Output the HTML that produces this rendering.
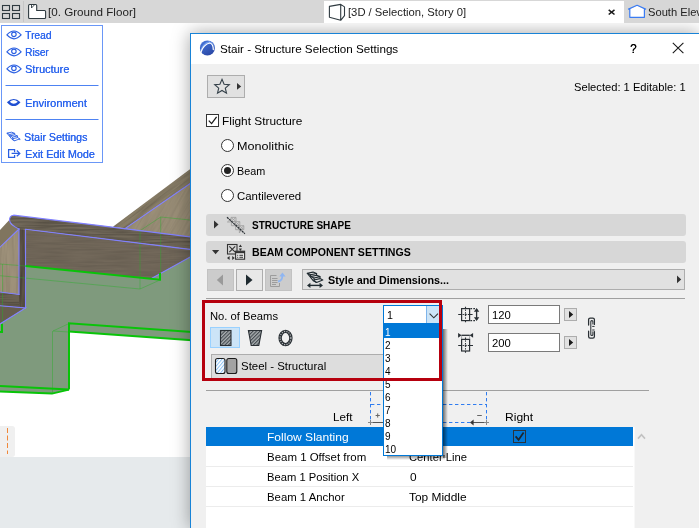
<!DOCTYPE html>
<html>
<head>
<meta charset="utf-8">
<style>
html,body{margin:0;padding:0;}
body{width:699px;height:528px;overflow:hidden;position:relative;background:#fff;font-family:"Liberation Sans",sans-serif;font-size:12px;color:#000;}
.abs{position:absolute;}
.t{position:absolute;white-space:pre;line-height:14px;font-size:11.5px;color:#000;transform-origin:0 0;}
svg{position:absolute;overflow:visible;}
#tabbar{left:0;top:0;width:699px;height:23px;background:#d7d7d7;}
#acttab{left:324px;top:1px;width:300px;height:23px;background:#fff;}
#panel{left:1px;top:25px;width:102px;height:138px;border:1px solid #6a97f7;background:#fff;box-sizing:border-box;}
#dlg{left:190px;top:10px;width:509px;height:495px;background:#f0f0f0;border-left:1px solid #1883d7;border-top:1px solid #1883d7;box-sizing:border-box;box-shadow:0 0 17px rgba(0,0,0,0.36);}
#title{left:191px;top:34px;width:508px;height:30px;background:#fff;}
.sec{left:206px;width:480px;height:22px;background:#d7d7d7;border-radius:3px;}
.btn{background:#e1e1e1;border:1px solid #adadad;box-sizing:border-box;}
.btnd{background:#cccccc;border:1px solid #bfbfbf;box-sizing:border-box;}
.inp{background:#fff;border:1px solid #7a7a7a;box-sizing:border-box;}
.rad{width:13px;height:13px;border:1px solid #333;border-radius:50%;background:#fff;box-sizing:border-box;left:221px;}
.li{position:absolute;left:385px;font-size:11.5px;line-height:13px;color:#000;transform-origin:0 0;transform:scaleX(0.87);}
</style>
</head>
<body>
<!-- ================= tab bar ================= -->
<div id="tabbar" class="abs"></div>
<div id="acttab" class="abs"></div>
<svg style="left:0;top:0;" width="699" height="24" viewBox="0 0 699 24">
  <g fill="none" stroke="#2f3a40" stroke-width="1.1">
    <rect x="2.5" y="5.5" width="7" height="5"/><rect x="12.5" y="5.5" width="7" height="5"/>
    <rect x="2.5" y="13.5" width="7" height="5"/><rect x="12.5" y="13.5" width="7" height="5"/>
  </g>
  <rect x="23" y="1" width="1" height="21" fill="#c6c6c6"/>
  <path d="M28.6 5.5 Q28.6 4.5 29.6 4.5 H35.7 Q36.7 4.5 36.7 5.5 V10.5 H44.6 Q45.6 10.5 45.6 11.5 V17.5 Q45.6 18.5 44.6 18.5 H29.6 Q28.6 18.5 28.6 17.5 Z" fill="#fff" stroke="#2f3a40" stroke-width="1.1"/>
  <path d="M31.5 4.8 V8 L34.5 4.8" fill="none" stroke="#2f3a40" stroke-width="0.9"/>
  <!-- 3D box icon -->
  <path d="M329.4 6.4 L340.7 4.4 V20.3 L329.4 17.2 Z M340.7 4.4 L344.5 6.9 V15.7 L340.7 20.3" fill="none" stroke="#2f3a40" stroke-width="1.1" stroke-linejoin="round"/>
  <!-- close x -->
  <path d="M608.7 9.9 L614.5 14.5 M614.5 9.9 L608.7 14.5" stroke="#1a1a1a" stroke-width="1.55" fill="none"/>
  <!-- house -->
  <path d="M629.8 9 L637.1 5.6 L644.4 9 V17.3 H629.8 Z" fill="#fff" stroke="none"/><path d="M628.5 9.1 L637.1 5.3 L645.6 9.1 M629.8 8.8 V17.3 H644.4 V8.8" fill="none" stroke="#3a7bf2" stroke-width="1.2" stroke-linejoin="round" stroke-linecap="round"/>
</svg>
<div class="t" style="left:47.90px;top:5.00px;transform:scaleX(1.0122);color:#222;">[0. Ground Floor]</div>
<div class="t" style="left:347.90px;top:5.00px;transform:scaleX(0.9775);color:#222;">[3D / Selection, Story 0]</div>
<div class="t" style="left:647.80px;top:5.00px;transform:scaleX(0.9700);color:#222;">South Elevation</div>

<!-- ================= 3D scene ================= -->
<svg id="scene" style="left:0;top:0;" width="192" height="528" viewBox="0 0 192 528">
  <defs>
    <filter id="grain" x="0" y="0" width="100%" height="100%">
      <feTurbulence type="fractalNoise" baseFrequency="0.03 0.55" numOctaves="2" seed="3" result="n"/>
      <feColorMatrix in="n" type="matrix" values="0 0 0 0 0  0 0 0 0 0  0 0 0 0 0  0.9 0 0 0 -0.28" result="a"/>
      <feComposite in="a" in2="SourceGraphic" operator="in"/>
    </filter>
    <filter id="grainv" x="0" y="0" width="100%" height="100%">
      <feTurbulence type="fractalNoise" baseFrequency="0.5 0.03" numOctaves="2" seed="5" result="n"/>
      <feColorMatrix in="n" type="matrix" values="0 0 0 0 0  0 0 0 0 0  0 0 0 0 0  0.9 0 0 0 -0.3" result="a"/>
      <feComposite in="a" in2="SourceGraphic" operator="in"/>
    </filter>
    <linearGradient id="gA" x1="0" y1="0" x2="0.4" y2="1">
      <stop offset="0" stop-color="#6f6656"/><stop offset="0.45" stop-color="#8d826b"/><stop offset="1" stop-color="#857a64"/>
    </linearGradient>
  </defs>
  <!-- upper right diagonal wood -->
  <polygon points="112.9,226.7 192,167.8 192,182.2 125,228.6" fill="url(#gA)"/>
  <polygon points="125,228.6 192,182.2 192,237.2" fill="#9a8e77"/>
  <!-- left pieces -->
  <polygon points="0,230 9.5,219.8 11,224.5 19,229 0,247.2" fill="#80755f"/>
  <polygon points="0,247.2 19,229 19,294.5 0,292" fill="#9e917a"/>
  <polygon points="19,229 25.5,229.3 25.5,308 19,307.5" fill="#5c5346"/>
  <polygon points="0,292 19,294.5 19,307.5 0,305.7" fill="#6a6152"/>
  <polygon points="0,305.7 25.5,308 0,324" fill="#675d4e"/>
  <!-- current tread: top/nose band -->
  <path id="nose" d="M13.5,215.2 L100,225.6 L192,237.1 L192,249.6 L26,229.3 L19,229 Q10,225 9.5,220.3 Q9.6,215.4 13.5,215.2 Z" fill="#72695a"/>
  <!-- underside -->
  <polygon points="25.5,229.3 192,249.6 192,256 151,278.7 25.5,266" fill="#72685a"/>
  <!-- grain overlays -->
  <g filter="url(#grain)" opacity="0.55">
    <path d="M13.5,215.2 L192,237.1 L192,249.6 L26,229.3 L19,229 Q10,225 9.5,220.3 Q9.6,215.4 13.5,215.2 Z" fill="#000"/>
    <polygon points="0,292 19,294.5 19,307.5 0,305.7" fill="#000"/>
  </g>
  <clipPath id="clipA"><polygon points="112.9,226.7 192,167.8 192,182.2 125,228.6"/></clipPath>
  <clipPath id="clipB"><polygon points="125,228.6 192,182.2 192,237.2"/></clipPath>
  <g clip-path="url(#clipA)" opacity="0.4"><g transform="rotate(-36.7 150 200)"><rect x="60" y="150" width="200" height="110" fill="#000" filter="url(#grain)"/></g></g>
  <g clip-path="url(#clipB)" opacity="0.16"><g transform="rotate(-60 150 200)"><rect x="60" y="120" width="200" height="170" fill="#000" filter="url(#grain)"/></g></g>
  <g filter="url(#grain)" opacity="0.2">
    <polygon points="25.5,229.3 192,249.6 192,256 151,278.7 25.5,266" fill="#000"/>
  </g>
  <g filter="url(#grainv)" opacity="0.5">
    <polygon points="19,229 25.5,229.3 25.5,308 19,307.5" fill="#000"/>
  </g>
  <g filter="url(#grainv)" opacity="0.18">
    <polygon points="0,247.2 19,229 19,294.5 0,292" fill="#000"/>
  </g>
  <!-- green region -->
  <polygon points="25.5,266 151,278.7 192,256 192,340.2 69,331.4 69,389.6 52,393.6 0,391.4 0,324 25.5,308" fill="#7f9a7d"/>
  <!-- thin green lines -->
  <g fill="none" stroke="#27b027" stroke-width="1" opacity="0.42">
    <path d="M0,264 L25.5,266 M2.5,264 V324 M0,275.7 L140,289 L160,280 M140,230.7 V289 M160.7,217 V273 M160.7,217 L192,220.2 M160.7,217 L140,230.7 M53,331 L68,324 M52.5,331 V393 M53,331 L69,332"/>
  </g>
  <!-- blue lines -->
  <g fill="none" stroke="#8080ff" stroke-width="1.15" stroke-linecap="round">
    <path d="M192,237.1 L100,225.6 L13.5,215.2 Q9.6,215.4 9.5,220.3 Q10,225 19,229"/>
    <path d="M25.5,229.3 L192,249.6"/>
    <path d="M19,229 V294.5 M25.5,229.3 V308"/>
    <path d="M0,247.2 L19,229"/>
    <path d="M0,292 L19,294.5"/>
    <path d="M0,305.7 L25.5,308 L0,324"/>
    <path d="M125,228.6 L192,182.2"/>
    <path d="M151,278.7 L192,256"/>
  </g>
  <!-- bright green lines -->
  <g fill="none" stroke="#08c408" stroke-width="2" stroke-linejoin="miter">
    <path d="M25.5,266 L160,279.7 V272.9"/>
    <path d="M69,389.6 V323.3 L192,332"/>
    <path d="M69,331.4 L192,340.2"/>
    <path d="M0,386 L69,389.6"/>
    <path d="M0,391.4 L52,393.6 L69,389.6"/>
    <path d="M2,324 V332 H0"/>
  </g>
  <!-- bottom-left bar and small box -->
  <rect x="0" y="457" width="192" height="71" fill="#e6eaec"/>
  <path d="M0,426 H12 Q15,426 15,429 V454 Q15,457 12,457 H0 Z" fill="#f0f0f0"/>
  <path d="M7.5,428 V454" stroke="#f0883a" stroke-width="1" stroke-dasharray="5,2.5" fill="none"/>
</svg>

<!-- ================= left panel ================= -->
<div id="panel" class="abs"></div>
<svg style="left:0;top:0;" width="110" height="170" viewBox="0 0 110 170">
  <g fill="none" stroke="#2a5fe2" stroke-width="1.15">
    <!-- eyes -->
    <g><path d="M6.9,34.9 Q14,27 21.1,34.9 Q14,42.7 6.9,34.9 Z"/><circle cx="13.9" cy="34.3" r="2.25"/></g>
    <g transform="translate(0,17)"><path d="M6.9,34.9 Q14,27 21.1,34.9 Q14,42.7 6.9,34.9 Z"/><circle cx="13.9" cy="34.3" r="2.25"/></g>
    <g transform="translate(0,34)"><path d="M6.9,34.9 Q14,27 21.1,34.9 Q14,42.7 6.9,34.9 Z"/><circle cx="13.9" cy="34.3" r="2.25"/></g>
  </g>
  <!-- environment -->
  <path fill-rule="evenodd" fill="#1f4fd2" d="M6.9,102.2 Q13.8,95.6 20.5,102.2 Q13.8,110 6.9,102.2 Z M9.7,101.7 Q13.8,98.4 17.8,101.7 Q13.8,105.8 9.7,101.7 Z"/>
  <!-- stair settings icon -->
  <g fill="none" stroke="#2a5fe2" stroke-width="1.1" stroke-linejoin="round" transform="translate(6.9,132.2) scale(0.83) translate(-307.2,-272.1)">
    <path d="M307.2,273.2 L313,272.1 L316.6,273.5 L310.6,274.8 Z"/>
    <path d="M310.6,274.8 V276.6 L316.6,275.3 V273.5 M316.6,275.3 L320,276.6 L314,278 L310.6,276.6"/>
    <path d="M314,278 V280 L320,278.6 V276.6 M320,278.6 L322.8,280.1 L316.6,282.4 L313.4,280.6"/>
    <path d="M307.2,273.2 L313.4,280.8 L316.6,282.4 M322.8,280.1 V281.6"/>
  </g>
  <!-- exit icon -->
  <g fill="none" stroke="#2a5fe2" stroke-width="1.25">
    <path d="M14.6,152.2 V149.6 H8.6 V157.4 H14.6 V155"/>
    <path d="M11.6,153.4 H19.4 M16.8,150.5 L19.8,153.4 L16.8,156.3"/>
  </g>
  <rect x="5.5" y="85" width="93" height="1" fill="#4d82f2"/>
  <rect x="5.5" y="119" width="93" height="1" fill="#4d82f2"/>
</svg>
<div class="t" style="left:25.40px;top:28.00px;transform:scaleX(0.8911);color:#2d66ee;text-shadow:0.35px 0 0 currentColor;">Tread</div>
<div class="t" style="left:25.40px;top:45.00px;transform:scaleX(0.8829);color:#2d66ee;text-shadow:0.35px 0 0 currentColor;">Riser</div>
<div class="t" style="left:25.40px;top:62.00px;transform:scaleX(0.9470);color:#2d66ee;text-shadow:0.35px 0 0 currentColor;">Structure</div>
<div class="t" style="left:25.40px;top:96.00px;transform:scaleX(0.9557);color:#2d66ee;text-shadow:0.35px 0 0 currentColor;">Environment</div>
<div class="t" style="left:24.40px;top:130.00px;transform:scaleX(0.9239);color:#2d66ee;text-shadow:0.35px 0 0 currentColor;">Stair Settings</div>
<div class="t" style="left:25.40px;top:147.00px;transform:scaleX(0.9413);color:#2d66ee;text-shadow:0.35px 0 0 currentColor;">Exit Edit Mode</div>

<!--DIALOG_START-->
<!-- ================= dialog ================= -->
<div class="abs" style="left:0;top:23px;width:699px;height:505px;overflow:hidden;"><div id="dlg" class="abs"></div></div>
<div id="title" class="abs"></div>
<div class="abs sec" style="top:214px;"></div>
<div class="abs sec" style="top:241px;"></div>
<svg style="left:0;top:0;" width="699" height="528" viewBox="0 0 699 528">
  <defs>
    <linearGradient id="acg" x1="0" y1="0" x2="0.6" y2="1"><stop offset="0" stop-color="#4a7ade"/><stop offset="1" stop-color="#2b4aa8"/></linearGradient>
    <pattern id="hatch" width="2.5" height="2.5" patternUnits="userSpaceOnUse" patternTransform="rotate(-45)"><rect width="2.5" height="2.5" fill="#a9aeb1"/><rect width="2.5" height="1.15" fill="#454c51"/></pattern>
    <pattern id="hatchb" width="2.6" height="2.6" patternUnits="userSpaceOnUse" patternTransform="rotate(-50)"><rect width="2.6" height="2.6" fill="#fff"/><rect width="2.6" height="1" fill="#8cc3f5"/></pattern>
  </defs>
  <!-- title icon -->
  <circle cx="207.4" cy="47.9" r="7.5" fill="url(#acg)"/>
  <path d="M200.3,50.5 Q202.5,42.5 209.5,41 Q214.5,43 214.8,49 Q213.5,43.6 209.6,43 Q203.6,44.6 200.9,52.2 Z" fill="#6b97ea"/><path d="M200.9,52.2 Q203.6,44.6 209.6,43 Q213.2,43.6 213.3,49.6" fill="none" stroke="#fff" stroke-width="1.25" stroke-linecap="round"/>
  <!-- close X -->
  <path d="M672.8,42.8 L683.4,53.2 M683.4,42.8 L672.8,53.2" stroke="#1a1a1a" stroke-width="1.1" fill="none"/>
  <!-- star button -->
  <rect x="207.5" y="75.5" width="37" height="22" fill="#e1e1e1" stroke="#adadad"/>
  <path d="M222.0,79.3 L224.1,84.2 L229.3,84.6 L225.3,88.1 L226.5,93.2 L222.0,90.5 L217.5,93.2 L218.7,88.1 L214.7,84.6 L219.9,84.2 Z" fill="none" stroke="#333f48" stroke-width="1.1" stroke-linejoin="miter"/>
  <path d="M237,83 L241.2,86.4 L237,89.8 Z" fill="#333"/>
  <!-- checkbox -->
  <rect x="206.5" y="114.5" width="12" height="12" fill="#fff" stroke="#333"/>
  <path d="M208.8,120.6 L211.6,123.6 L216.6,116.8" fill="none" stroke="#1a1a1a" stroke-width="1.3"/>
  <!-- section arrows -->
  <path d="M214,220.5 L218.5,224.5 L214,228.5 Z" fill="#333"/>
  <path d="M212,250 H219.2 L215.6,254.2 Z" fill="#333"/>
  <!-- section icon 1 -->
  <g fill="none" stroke="#a3a3a3" stroke-width="0.9">
    <path d="M231,217.4 h5 v4.2 h-5 Z M231,217.4 l5,4.2 M236,217.4 l-5,4.2"/>
    <path d="M231.4,221.6 h4 v4.1 h-4 Z M235.4,221.6 h4.4 v4.1 h-4.4 Z M235.4,221.6 l4.4,4.1 M239.8,221.6 l-4.4,4.1 M231.4,221.6 l4,4.1"/>
    <path d="M235.6,225.7 h3.8 v4 h-3.8 Z M239.4,225.7 h4.4 v4 h-4.4 Z M239.4,225.7 l4.4,4 M243.8,225.7 l-4.4,4 M235.6,225.7 l3.8,4"/>
    <path d="M227.4,222 L230.6,219 V222 Z M239.4,229.7 V233 L241.2,229.7"/>
  </g>
  <path d="M227,217.2 L244.9,233.7" stroke="#2a3035" stroke-width="1.2" stroke-dasharray="2.2,0.7"/>
  <!-- section icon 2 -->
  <g fill="none" stroke="#333" stroke-width="1.1">
    <rect x="227.5" y="244.5" width="9.5" height="9.5"/>
    <path d="M229.3,246.3 L235.2,252.2 M235.2,246.3 L229.3,252.2"/>
  </g>
  <path d="M238.8,247 L240.4,244.4 L242,247 Z M238.8,248.6 L240.4,251 L242,248.6 Z" fill="#333"/>
  <path d="M229.6,256 V260 L227,258 Z M232.2,256 V260 L234.8,258 Z" fill="#333"/>
  <rect x="235.6" y="251.2" width="9" height="8" fill="#e8e8e8" stroke="#333" stroke-width="1.1"/>
  <rect x="235.6" y="251.2" width="9" height="2" fill="#333"/>
  <path d="M237.2,255.3 h1 M239.4,255.3 h3.6 M237.2,257.3 h1 M239.4,257.3 h3.6" stroke="#333" stroke-width="1"/>
  <!-- nav buttons -->
  <rect x="207.5" y="269.5" width="26" height="21" fill="#cccccc" stroke="#c2c2c2"/>
  <path d="M223,274.4 V285.6 L216.8,280 Z" fill="#9a9a9a"/>
  <rect x="236.5" y="269.5" width="26" height="21" fill="#e8e8e8" stroke="#adadad"/>
  <path d="M246,274.4 V285.6 L252.5,280 Z" fill="#1f2a30"/>
  <rect x="265.5" y="269.5" width="26" height="21" fill="#cccccc" stroke="#c2c2c2"/>
  <g fill="none" stroke="#9c9c9c" stroke-width="1">
    <path d="M276.5,275.5 H270.5 V286.5 H279.5 V283"/>
    <path d="M272,278.5 h5.5 M272,280.5 h5.5 M272,282.5 h5.5 M272,284.5 h4"/>
  </g>
  <path d="M278,281.5 Q282.5,281 282.3,275.5" fill="none" stroke="#8fb6f2" stroke-width="1.8"/>
  <path d="M279.3,276.6 L282.4,272.6 L285.6,276.6 Z" fill="#8fb6f2"/>
  <!-- style button -->
  <rect x="302.5" y="269.5" width="382" height="20" fill="#e1e1e1" stroke="#adadad"/>
  <path d="M677,275.6 L681.2,279.4 L677,283.2 Z" fill="#333"/>
  <g fill="none" stroke="#1f2a30" stroke-width="1.1" stroke-linejoin="round">
    <path d="M307.2,273.2 L313,272.1 L316.6,273.5 L310.6,274.8 Z"/>
    <path d="M310.6,274.8 V276.6 L316.6,275.3 V273.5 M316.6,275.3 L320,276.6 L314,278 L310.6,276.6"/>
    <path d="M314,278 V280 L320,278.6 V276.6 M320,278.6 L322.8,280.1 L316.6,282.4 L313.4,280.6"/>
    <path d="M307.2,273.2 L313.4,280.8 L316.6,282.4"/>
  </g>
  <path d="M309,285.4 H321" stroke="#1f2a30" stroke-width="1.4"/>
  <path d="M310.4,282.8 L307,285.4 L310.4,288 Z M319.6,282.8 L323,285.4 L319.6,288 Z" fill="#1f2a30"/>
  <!-- separators -->
  <rect x="206" y="298" width="479" height="1" fill="#a0a0a0"/>
  <rect x="206" y="390" width="443" height="1" fill="#a0a0a0"/>
  <!-- shape buttons -->
  <rect x="210.5" y="327.5" width="29" height="20" fill="#cce4f7" stroke="#99d1ff"/>
  <rect x="220.5" y="330.5" width="10.5" height="15" fill="url(#hatch)" stroke="#2a3035" stroke-width="1.1"/>
  <path d="M248.4,330.5 H261.6 L258.8,345.5 H251.2 Z" fill="url(#hatch)" stroke="#2a3035" stroke-width="1.1"/>
  <ellipse cx="285.5" cy="338" rx="5.4" ry="6.6" fill="none" stroke="#2a3035" stroke-width="3.4"/>
  <ellipse cx="285.5" cy="338" rx="5.4" ry="6.6" fill="none" stroke="#b9bcbe" stroke-width="1.2" stroke-dasharray="1.2,1.2"/>
  <!-- steel button -->
  <rect x="211.5" y="354.5" width="172" height="24" fill="#dddddd" stroke="#adadad"/>
  <rect x="215.5" y="358.5" width="9.5" height="15" rx="2" fill="url(#hatchb)" stroke="#1a1a1a" stroke-width="1.1"/>
  <rect x="226.8" y="358.5" width="10" height="15" rx="2" fill="#a3a3a3" stroke="#1a1a1a" stroke-width="1.1"/>
  <!-- inputs -->
  <rect x="488.5" y="305.5" width="71" height="18" fill="#fff" stroke="#7a7a7a"/>
  <rect x="488.5" y="333.5" width="71" height="18" fill="#fff" stroke="#7a7a7a"/>
  <rect x="564.5" y="308.5" width="12" height="12" fill="#e1e1e1" stroke="#adadad"/>
  <rect x="564.5" y="336.5" width="12" height="12" fill="#e1e1e1" stroke="#adadad"/>
  <path d="M569,311 L573.2,314.5 L569,318 Z M569,339 L573.2,342.5 L569,346 Z" fill="#1a1a1a"/>
  <!-- chain -->
  <g fill="none" stroke="#2a3035" stroke-width="1.25" stroke-linecap="round">
    <path d="M588.6,325 V319.6 Q588.6,318 590.2,318 H592.8 Q594.4,318 594.4,319.6 V324.4"/>
    <path d="M588.6,331.2 V336.4 Q588.6,338 590.2,338 H592.8 Q594.4,338 594.4,336.4 V331.6"/>
    <path d="M592.9,324 V321.6 Q592.9,320.6 591.8,320.6 Q590.8,320.6 590.8,321.6 V334.4 Q590.8,335.4 591.8,335.4 Q592.9,335.4 592.9,334.4 V331.8" stroke-width="1.05"/>
    <path d="M592.6,326.4 h1.6 M592.6,330 h1.6" stroke-width="1"/>
  </g>
  <!-- width icon -->
  <g fill="none" stroke="#2a3035">
    <rect x="461.6" y="308.6" width="8" height="12" stroke-width="1.2"/>
    <path d="M458.2,314.5 H461.6 M469.6,314.5 H472.6 M465.5,306.8 V308.6 M465.5,320.6 V322.2" stroke-width="1.1"/>
    <path d="M462.6,314.5 H469 M465.5,309.6 V320" stroke-width="1" stroke-dasharray="1.3,1.3"/>
    <path d="M470.4,308.6 H475.6 M470.4,320.6 H475.6" stroke-width="1.1" stroke-dasharray="1.7,1.2"/>
    <path d="M476.6,309.5 V319.5" stroke-width="1.3"/>
  </g>
  <rect x="464.7" y="313.7" width="1.7" height="1.7" fill="#2a3035"/>
  <path d="M473.9,311.8 L476.6,308 L479.3,311.8 Z M473.9,317.2 L476.6,321 L479.3,317.2 Z" fill="#2a3035"/>
  <!-- height icon -->
  <g fill="none" stroke="#2a3035">
    <rect x="461.6" y="339.4" width="8" height="11.6" stroke-width="1.2"/>
    <path d="M458.2,345.5 H461.6 M469.6,345.5 H473 M465.5,337.4 V339.4 M465.5,351 V352.8" stroke-width="1.1"/>
    <path d="M462.6,345.5 H469 M465.5,340.4 V350.4" stroke-width="1" stroke-dasharray="1.3,1.3"/>
    <path d="M461.4,335.3 H469.8" stroke-width="1.3"/>
    <path d="M461.6,336.2 V339 M469.6,336.2 V339" stroke-width="0.8" stroke="#8a8f93"/>
  </g>
  <rect x="464.7" y="344.7" width="1.7" height="1.7" fill="#2a3035"/>
  <path d="M458.1,333 L461.6,335.3 L458.1,337.7 Z M473.1,333 L469.6,335.3 L473.1,337.7 Z" fill="#2a3035"/>
  <!-- beam position diagram -->
  <g fill="none" stroke="#2f7cf0" stroke-width="1" stroke-dasharray="3.4,2.6">
    <path d="M370.5,392 V421 M486.5,392 V421 M371,404.5 H486 M443,422.5 H472"/>
  </g>
  <path d="M372,422.5 H384 M472,422.5 H485" stroke="#555" stroke-width="1"/>
  <path d="M473.6,419.6 L470,422.5 L473.6,425.4 Z" fill="#333"/>
  <path d="M368,422.5 h5 M370.5,420 v5 M484,422.5 h5 M486.5,420 v5" stroke="#888" stroke-width="1"/>
  <path d="M375.6,415.5 h4.2 M377.7,413.4 v4.2 M477.2,415.5 h4.6" stroke="#666" stroke-width="1"/>
  <!-- table -->
  <rect x="206" y="427" width="428.5" height="101" fill="#fff"/>
  <rect x="206" y="427" width="427" height="19" fill="#0078d7"/>
  <rect x="206" y="466" width="427" height="1" fill="#ececec"/>
  <rect x="206" y="486" width="427" height="1" fill="#ececec"/>
  <rect x="206" y="506" width="427" height="1" fill="#ececec"/>
  <rect x="513.5" y="430.5" width="12" height="12" fill="#0078d7" stroke="#2b333a"/>
  <path d="M515.6,436.4 L518.6,439.8 L523.6,432.6" fill="none" stroke="#1d252c" stroke-width="1.7"/>
  <path d="M638,438.6 L641.5,434.6 L645,438.6" fill="none" stroke="#c2c2c2" stroke-width="1.6"/>
</svg>
<div class="abs rad" style="top:139px;"></div>
<div class="abs rad" style="top:164px;"></div>
<div class="abs" style="left:224px;top:167px;width:7px;height:7px;border-radius:50%;background:#222;"></div>
<div class="abs rad" style="top:189px;"></div>
<div class="t" style="left:219.90px;top:42.00px;transform:scaleX(1.0138);">Stair - Structure Selection Settings</div>
<div class="t" style="left:629.80px;top:42.00px;transform:scaleX(0.9123);font-size:13px;text-shadow:0.35px 0 0 currentColor;">?</div>
<div class="t" style="left:574.00px;top:80.00px;transform:scaleX(0.9696);">Selected: 1 Editable: 1</div>
<div class="t" style="left:221.80px;top:114.00px;transform:scaleX(1.0310);">Flight Structure</div>
<div class="t" style="left:236.80px;top:139.00px;transform:scaleX(1.0969);">Monolithic</div>
<div class="t" style="left:236.80px;top:164.00px;transform:scaleX(0.9385);">Beam</div>
<div class="t" style="left:236.80px;top:189.00px;transform:scaleX(0.9941);">Cantilevered</div>
<div class="t" style="left:252.30px;top:218.00px;transform:scaleX(0.8687);font-weight:bold;">STRUCTURE SHAPE</div>
<div class="t" style="left:252.30px;top:245.00px;transform:scaleX(0.9205);font-weight:bold;">BEAM COMPONENT SETTINGS</div>
<div class="t" style="left:328.20px;top:273.00px;transform:scaleX(0.9373);font-weight:bold;">Style and Dimensions...</div>
<div class="t" style="left:210.00px;top:309.00px;transform:scaleX(0.9760);">No. of Beams</div>
<div class="t" style="left:240.80px;top:359.00px;transform:scaleX(0.9947);">Steel - Structural</div>
<div class="t" style="left:491.80px;top:308.00px;transform:scaleX(0.9798);">120</div>
<div class="t" style="left:491.80px;top:336.00px;transform:scaleX(0.9798);">200</div>
<div class="t" style="left:332.80px;top:410.00px;transform:scaleX(1.0111);">Left</div>
<div class="t" style="left:504.80px;top:410.00px;transform:scaleX(1.0499);">Right</div>
<div class="t" style="left:267.40px;top:430.00px;transform:scaleX(1.0464);color:#fff;">Follow Slanting</div>
<div class="t" style="left:267.40px;top:450.00px;transform:scaleX(0.9970);">Beam 1 Offset from</div>
<div class="t" style="left:267.40px;top:470.00px;transform:scaleX(0.9745);">Beam 1 Position X</div>
<div class="t" style="left:267.40px;top:490.00px;transform:scaleX(0.9880);">Beam 1 Anchor</div>
<div class="t" style="left:409.00px;top:450.00px;transform:scaleX(0.9753);">Center Line</div>
<div class="t" style="left:410.00px;top:470.00px;transform:scaleX(1.0302);">0</div>
<div class="t" style="left:409.00px;top:490.00px;transform:scaleX(1.0355);">Top Middle</div>

<!-- combo + dropdown list -->
<div class="abs" style="left:443px;top:329px;width:5px;height:129px;background:linear-gradient(to right,rgba(0,0,0,0.55),rgba(0,0,0,0));"></div>
<div class="abs" style="left:387px;top:455px;width:58px;height:5px;background:linear-gradient(to bottom,rgba(0,0,0,0.5),rgba(0,0,0,0));"></div>
<div class="abs" style="left:383px;top:305px;width:60px;height:19px;background:#fff;border:1px solid #0078d7;box-sizing:border-box;"></div>
<div class="abs" style="left:426px;top:306px;width:16px;height:17px;background:#cce4f7;border-left:1px solid #7eb4ea;box-sizing:border-box;"></div>
<svg style="left:0;top:0;" width="699" height="528" viewBox="0 0 699 528"><path d="M429.6,313.6 L433.8,317.8 L438,313.6" fill="none" stroke="#333" stroke-width="1.1"/></svg>
<div class="t" style="left:386.5px;top:307.8px;transform:scaleX(0.93);">1</div>
<div class="abs" style="left:383px;top:323px;width:60px;height:133px;background:#fff;border:1px solid #0078d7;box-sizing:border-box;"></div>
<div class="abs" style="left:384px;top:324px;width:58px;height:14px;background:#0078d7;"></div>
<div class="li" style="top:326px;color:#fff;">1</div>
<div class="li" style="top:339px;">2</div>
<div class="li" style="top:352px;">3</div>
<div class="li" style="top:365px;">4</div>
<div class="li" style="top:378px;">5</div>
<div class="li" style="top:391px;">6</div>
<div class="li" style="top:404px;">7</div>
<div class="li" style="top:417px;">8</div>
<div class="li" style="top:430px;">9</div>
<div class="li" style="top:443px;">10</div>
<!-- red highlight box -->
<div class="abs" style="left:202px;top:300px;width:240px;height:81px;border:3px solid #b6000e;box-sizing:border-box;"></div>

<!--DIALOG_END-->
</body>
</html>
